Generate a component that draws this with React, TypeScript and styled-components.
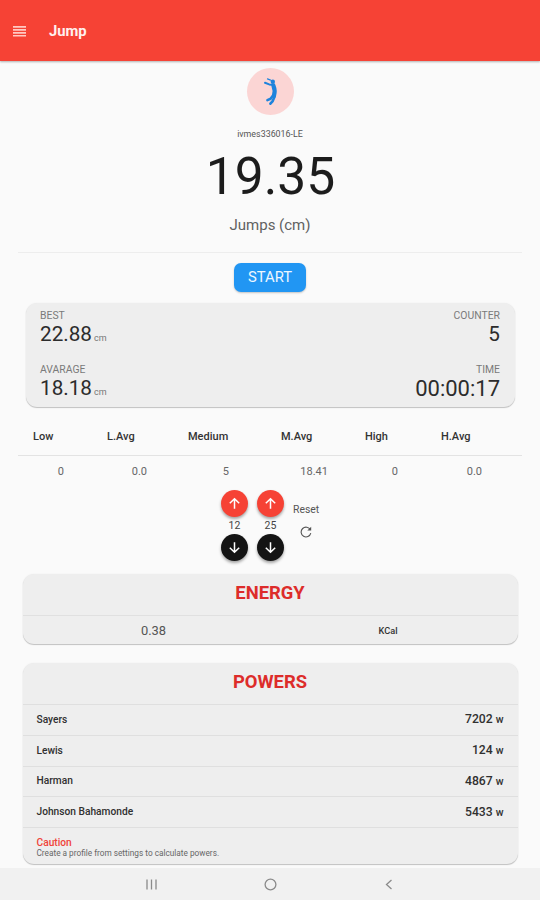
import React from 'react';
import styled, { createGlobalStyle, css } from 'styled-components';

const GlobalStyle = createGlobalStyle`
  * { box-sizing: border-box; }
  body {
    margin: 0;
    background: #fafafa;
    font-family: Roboto, "Liberation Sans", sans-serif;
    color: #212121;
  }
`;

const Screen = styled.div`
  width: 540px;
  height: 900px;
  display: flex;
  flex-direction: column;
  overflow: hidden;
  background: #fafafa;
`;

const AppBar = styled.header`
  flex: none;
  height: 61px;
  display: flex;
  align-items: center;
  gap: 22px;
  padding: 0 12px;
  background: #f64235;
  box-shadow: 0 1px 2px rgba(0, 0, 0, 0.3);
`;

const MenuIcon = styled.svg`
  width: 15px;
  height: 12px;
  fill: #ffc9c3;
`;

const AppTitle = styled.h1`
  margin: 0;
  color: #fff0ee;
  font-size: 14.8px;
  font-weight: 700;
  line-height: 20px;
`;

const Main = styled.main`
  flex: 1;
  min-height: 0;
  display: flex;
  flex-direction: column;
  align-items: center;
  padding-top: 7px;
`;

const Avatar = styled.div`
  width: 47px;
  height: 47px;
  margin-left: 1px;
  border-radius: 50%;
  background: #fbd5d4;
  display: flex;
  align-items: center;
  justify-content: center;

  svg { width: 47px; height: 47px; }
`;

const DeviceName = styled.div`
  margin-top: 12px;
  font-size: 8.9px;
  line-height: 14px;
  color: #555;
`;

const Reading = styled.div`
  margin-top: 6px;
  margin-left: 1px;
  font-size: 51.5px;
  line-height: 60px;
  color: #1c1c1c;
`;

const ReadingLabel = styled.div`
  margin-top: 8px;
  font-size: 15px;
  line-height: 20px;
  color: #616161;
`;

const Divider = styled.hr`
  width: 504px;
  height: 1px;
  margin: 17px 0 0;
  border: 0;
  background: #ededed;
`;

const StartButton = styled.button`
  width: 72px;
  height: 29px;
  margin-top: 10px;
  padding: 0 0 1px;
  border: 0;
  border-radius: 7px;
  background: #2196f3;
  box-shadow: 0 1px 2px rgba(0, 0, 0, 0.22);
  color: #edf7ff;
  font: 400 14.8px/27px Roboto, sans-serif;
`;

const cardSurface = css`
  background: #eee;
  border-radius: 11px;
  box-shadow: 0 1px 1px rgba(0, 0, 0, 0.22), 0 0 2px rgba(0, 0, 0, 0.05);
`;

const StatsCard = styled.section`
  ${cardSurface}
  width: 489px;
  height: 104px;
  margin-top: 11px;
  margin-left: 1px;
  padding: 6px 15px 0 14px;
  display: flex;
  flex-direction: column;
  gap: 18px;
`;

const StatsRow = styled.div`
  display: flex;
  justify-content: space-between;
`;

const Stat = styled.div<{ $end?: boolean }>`
  height: 36px;
  text-align: ${(p) => (p.$end ? 'right' : 'left')};
`;

const StatLabel = styled.div`
  font-size: 10.4px;
  line-height: 13px;
  color: #7a7a7a;
`;

const StatValue = styled.div<{ $size?: number }>`
  font-size: ${(p) => p.$size ?? 20.7}px;
  line-height: 25px;
  color: #2c2c2c;

  small {
    margin-left: 2px;
    font-size: 9px;
    color: #777;
  }
`;

const TableRow = styled.div<{ $head?: boolean }>`
  width: 504px;
  height: ${(p) => (p.$head ? '49px' : '34px')};
  padding: ${(p) => (p.$head ? '11px' : '0')} 0 0 15px;
  border-bottom: ${(p) => (p.$head ? '1px solid #e3e3e3' : '0')};
  display: flex;
  align-items: ${(p) => (p.$head ? 'center' : 'flex-start')};
  font-size: 11px;
  font-weight: ${(p) => (p.$head ? 500 : 400)};
  line-height: ${(p) => (p.$head ? '20px' : '31px')};
  color: ${(p) => (p.$head ? '#333' : '#666')};
`;

const TableCell = styled.div<{ $width: number; $gap: number; $end?: boolean }>`
  flex: none;
  width: ${(p) => p.$width}px;
  margin-right: ${(p) => p.$gap}px;
  text-align: ${(p) => (p.$end ? 'right' : 'left')};
  white-space: nowrap;
`;

const Controls = styled.div`
  width: 98px;
  height: 84px;
  display: flex;
  gap: 9px;
`;

const Stepper = styled.div`
  width: 27px;
  display: flex;
  flex-direction: column;
  align-items: center;
  font-size: 10.5px;
  line-height: 17px;
  color: #444;
`;

const RoundButton = styled.button<{ $dark?: boolean }>`
  flex: none;
  width: 27px;
  height: 27px;
  padding: 0;
  border: 0;
  border-radius: 50%;
  display: grid;
  place-items: center;
  background: ${(p) => (p.$dark ? '#141414' : '#f64235')};
  box-shadow: 0 2px 3px rgba(0, 0, 0, 0.35);
`;

const ResetGroup = styled.div`
  width: 27px;
  padding-top: 12px;
  display: flex;
  flex-direction: column;
  align-items: center;
  gap: 9px;
  font-size: 10.4px;
  line-height: 15px;
  color: #555;
`;

const Card = styled.section<{ $top: number; $height: number }>`
  ${cardSurface}
  flex: none;
  width: 495px;
  height: ${(p) => p.$height}px;
  margin-top: ${(p) => p.$top}px;
  overflow: hidden;
`;

const CardTitle = styled.h2`
  margin: 0;
  height: 41px;
  text-align: center;
  font-size: 18.4px;
  font-weight: 700;
  line-height: 37px;
  color: #dd2c2a;
`;

const EnergyRow = styled.div`
  height: 29px;
  border-top: 1px solid #e0e0e0;
  display: grid;
  grid-template-columns: 262px 207px;
  align-items: center;
  text-align: center;
  font-size: 12.9px;
  color: #555;

  strong { font-size: 9.2px; font-weight: 500; color: #333; }
`;

const PowerRow = styled.div`
  height: 30.75px;
  padding: 0 14px 1px;
  border-top: 1px solid #dfdfdf;
  display: flex;
  align-items: center;
  justify-content: space-between;
  font-size: 10.2px;
  font-weight: 500;
  color: #303030;
`;

const PowerValue = styled.span`
  font-size: 12.2px;
  small { font-size: 10.5px; }
`;

const Caution = styled.div`
  padding: 9px 14px 0;
  border-top: 1px solid #dfdfdf;
  font-size: 8.25px;
  line-height: 10px;
  color: #666;
`;

const CautionTitle = styled.div`
  font-size: 10.2px;
  font-weight: 500;
  line-height: 11px;
  color: #f0443a;
`;

const NavBar = styled.nav`
  flex: none;
  height: 32px;
  display: flex;
  align-items: center;
  justify-content: center;
  gap: 106px;
  background: #f1f1f1;

  svg { width: 13px; height: 13px; fill: none; stroke: #8b8b8b; stroke-width: 1.3; }
`;

const columns = [
  { label: 'Low', value: '0', width: 31, gap: 43 },
  { label: 'L.Avg', value: '0.0', width: 40, gap: 41 },
  { label: 'Medium', value: '5', width: 41, gap: 52 },
  { label: 'M.Avg', value: '18.41', width: 47, gap: 37 },
  { label: 'High', value: '0', width: 33, gap: 43 },
  { label: 'H.Avg', value: '0.0', width: 41, gap: 0 },
];

const powers = [
  { name: 'Sayers', watts: 7202 },
  { name: 'Lewis', watts: 124 },
  { name: 'Harman', watts: 4867 },
  { name: 'Johnson Bahamonde', watts: 5433 },
];

const Arrow = ({ down }: { down?: boolean }) => (
  <svg width="13" height="13" viewBox="0 0 13 13" fill="none" stroke="#fff" strokeWidth="1.5">
    <path d={down ? 'M6.5 1.2v10M1.8 6.7l4.7 4.6 4.7-4.6' : 'M6.5 11.8v-10M1.8 6.3l4.7-4.6 4.7 4.6'} />
  </svg>
);

const JumperIcon = () => (
  <svg viewBox="0 0 47 47" fill="none" stroke="#1e83dc" strokeLinecap="round" strokeLinejoin="round">
    <circle cx="25.8" cy="13.8" r="2.2" fill="#1e83dc" stroke="none" />
    <path d="M20.5 10.9l3 1.2" strokeWidth="1.2" />
    <path d="M18 14.8l4.2 1.6 4.4.6" strokeWidth="2" />
    <path d="M26.4 17.5c1.4 3.5 1.7 6.5.6 10" strokeWidth="4.2" />
    <path d="M26 27.5l-2.4 3.3-3.2 1.3" strokeWidth="2.6" />
    <path d="M27.6 28.5l-1.9 4.6-2.3 2.6" strokeWidth="2.6" />
  </svg>
);

const ResetIcon = () => (
  <svg width="12" height="12" viewBox="0 0 12 12" fill="none" stroke="#555" strokeWidth="1.1">
    <path d="M10.4 3.8A4.9 4.9 0 1 0 10.8 7.2" />
    <path d="M11.2.7v3.9H7.3z" fill="#555" stroke="none" />
  </svg>
);

const StepperControl = ({ value }: { value: number }) => (
  <Stepper>
    <RoundButton aria-label="Increase"><Arrow /></RoundButton>
    {value}
    <RoundButton $dark aria-label="Decrease"><Arrow down /></RoundButton>
  </Stepper>
);

export default function App() {
  return (
    <>
      <GlobalStyle />
      <Screen>
        <AppBar>
          <MenuIcon viewBox="0 0 15 12">
            <path d="M1 1h13v1.8H1zM1 4h13v1.8H1zM1 7h13v1.8H1zM1 10h13v1.4H1z" />
          </MenuIcon>
          <AppTitle>Jump</AppTitle>
        </AppBar>
        <Main>
          <Avatar><JumperIcon /></Avatar>
          <DeviceName>ivmes336016-LE</DeviceName>
          <Reading>19.35</Reading>
          <ReadingLabel>Jumps (cm)</ReadingLabel>
          <Divider />
          <StartButton>START</StartButton>
          <StatsCard>
            <StatsRow>
              <Stat>
                <StatLabel>BEST</StatLabel>
                <StatValue>22.88<small>cm</small></StatValue>
              </Stat>
              <Stat $end>
                <StatLabel>COUNTER</StatLabel>
                <StatValue>5</StatValue>
              </Stat>
            </StatsRow>
            <StatsRow>
              <Stat>
                <StatLabel>AVARAGE</StatLabel>
                <StatValue>18.18<small>cm</small></StatValue>
              </Stat>
              <Stat $end>
                <StatLabel>TIME</StatLabel>
                <StatValue $size={22}>00:00:17</StatValue>
              </Stat>
            </StatsRow>
          </StatsCard>
          <TableRow $head>
            {columns.map((c) => (
              <TableCell key={c.label} $width={c.width} $gap={c.gap}>{c.label}</TableCell>
            ))}
          </TableRow>
          <TableRow>
            {columns.map((c) => (
              <TableCell key={c.label} $width={c.width} $gap={c.gap} $end>{c.value}</TableCell>
            ))}
          </TableRow>
          <Controls>
            <StepperControl value={12} />
            <StepperControl value={25} />
            <ResetGroup>
              Reset
              <ResetIcon />
            </ResetGroup>
          </Controls>
          <Card $top={0} $height={70}>
            <CardTitle>ENERGY</CardTitle>
            <EnergyRow>
              <span>0.38</span>
              <strong>KCal</strong>
            </EnergyRow>
          </Card>
          <Card $top={19} $height={201}>
            <CardTitle>POWERS</CardTitle>
            {powers.map((p) => (
              <PowerRow key={p.name}>
                {p.name}
                <PowerValue>{p.watts} <small>w</small></PowerValue>
              </PowerRow>
            ))}
            <Caution>
              <CautionTitle>Caution</CautionTitle>
              Create a profile from settings to calculate powers.
            </Caution>
          </Card>
        </Main>
        <NavBar>
          <svg viewBox="0 0 13 13"><path d="M2 1.5v10M6.5 1.5v10M11 1.5v10" /></svg>
          <svg viewBox="0 0 13 13"><circle cx="6.5" cy="6.5" r="5.4" /></svg>
          <svg viewBox="0 0 13 13"><path d="M8.5 2L3.5 6.5l5 4.5" /></svg>
        </NavBar>
      </Screen>
    </>
  );
}
